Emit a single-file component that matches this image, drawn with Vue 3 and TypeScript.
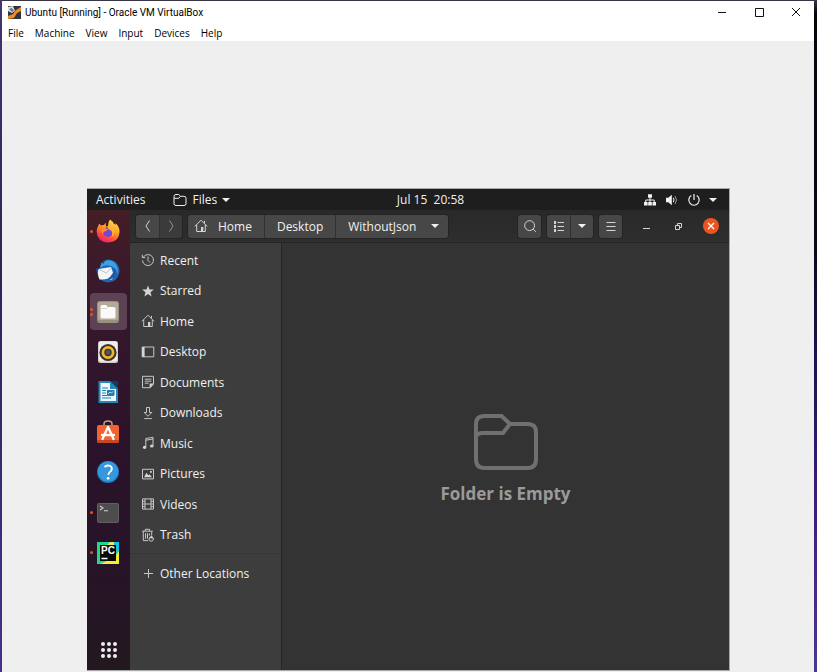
<script setup lang="ts">
interface Place {
  label: string
  line?: string
  solid?: string
}

interface DockApp {
  id: string
  label: string
  windows: number
  active?: boolean
}

const menus: string[] = ['File', 'Machine', 'View', 'Input', 'Devices', 'Help']

const dockApps: DockApp[] = [
  { id: 'firefox', label: 'Firefox', windows: 1 },
  { id: 'thunderbird', label: 'Thunderbird', windows: 0 },
  { id: 'files', label: 'Files', windows: 2, active: true },
  { id: 'rhythmbox', label: 'Rhythmbox', windows: 0 },
  { id: 'writer', label: 'Writer', windows: 0 },
  { id: 'software', label: 'Software', windows: 0 },
  { id: 'help', label: 'Help', windows: 0 },
  { id: 'terminal', label: 'Terminal', windows: 1 },
  { id: 'pycharm', label: 'PyCharm', windows: 1 },
]

const places: Place[] = [
  {
    label: 'Recent',
    line: 'M2.3 4.2A5.5 5.5 0 1 1 1.5 7.5M7 3.5V7.5L9 9.5M1.3 1.8V4.6H4.2',
  },
  {
    label: 'Starred',
    solid: 'M7 1.5L8.5 5.4L12.8 5.6L9.5 8.3L10.6 12.5L7 10.1L3.4 12.5L4.5 8.3L1.2 5.6L5.5 5.4Z',
  },
  {
    label: 'Home',
    line: 'M.8 7.4L7 1.2L13.2 7.4M2.7 6V12.5H11.3V6M10.5 1.8V4.3',
    solid: 'M7 8H9.3V12.8H7Z',
  },
  {
    label: 'Desktop',
    line: 'M1.2 2H12.8V11.8H1.2Z',
    solid: 'M1 2H3.6V12H1Z',
  },
  {
    label: 'Documents',
    line: 'M1.5 1.3H12.5V9.2L9.3 12.7H1.5ZM3.8 4.2H10.4M3.8 6.2H10.4M3.8 8.2H7.5',
    solid: 'M8.6 8.6H12.7L8.6 13Z',
  },
  {
    label: 'Downloads',
    line: 'M5.5 1.5H8.5V6.5H10.8L7 10.3L3.2 6.5H5.5ZM3.2 12.6H10.8',
  },
  {
    label: 'Music',
    line: 'M4.8 11V2.5L12 1.3V9.7M4.8 4.2L12 3',
    solid: 'M1.8 11.3A1.8 1.6 0 1 1 5.4 11.3A1.8 1.6 0 1 1 1.8 11.3M9 10A1.8 1.6 0 1 1 12.6 10A1.8 1.6 0 1 1 9 10',
  },
  {
    label: 'Pictures',
    line: 'M1.5 2.3H12.5V11.9H1.5Z',
    solid: 'M3 10.3L5.5 5.8L7.3 8.3L8.5 7.3L11 10.3ZM9 4H10.8V5.8H9Z',
  },
  {
    label: 'Videos',
    line: 'M1.5 1.9H12.5V12.1H1.5ZM4 2V12M10 2V12M4 7H10M1.5 4.4H4M1.5 7H4M1.5 9.6H4M10 4.4H12.5M10 7H12.5M10 9.6H12.5',
  },
  {
    label: 'Trash',
    line: 'M1 3.2H11.8M4.3 3V1.3H8.5V3M2.3 3.5V12.6H7.2M10.7 3.5V7.4M4.6 5.3V10.7M6.5 5.3V10.7M8.4 5.3V7.6M8 11A2 2 0 1 1 12.4 11A2 2 0 1 1 8 11',
    solid: 'M8.5 10.3L10.8 7.3L12 10.4Z',
  },
]
</script>

<template>
  <div class="wallpaper">
    <div class="vm-window">
      <header class="titlebar">
        <svg class="vm-logo" viewBox="0 0 13 13" aria-hidden="true">
          <rect width="13" height="13" fill="#30343c" />
          <path d="M0 1L5 0L7 5L4 7L0 5Z" fill="#dce0e4" />
          <path d="M5 8L8 4L13 1V5L9 7L6 12L0 13V10Z" fill="#f08a28" />
          <path d="M1 3L4 2L6 5L4 6Z" fill="#73716e" />
        </svg>
        <h1 class="vm-title">Ubuntu [Running] - Oracle VM VirtualBox</h1>
        <div class="caption-buttons">
          <button type="button" aria-label="Minimize">
            <svg viewBox="0 0 10 10"><path d="M1 5.5H9" /></svg>
          </button>
          <button type="button" aria-label="Maximize">
            <svg viewBox="0 0 10 10"><path d="M1.5 1.5H9.5V9.5H1.5Z" /></svg>
          </button>
          <button type="button" aria-label="Close">
            <svg viewBox="0 0 10 10"><path d="M1 1L9 9M9 1L1 9" /></svg>
          </button>
        </div>
      </header>

      <nav class="menubar" aria-label="Machine menu">
        <button v-for="menu in menus" :key="menu" type="button">{{ menu }}</button>
      </nav>

      <main class="viewport">
        <div class="guest">
          <div class="topbar">
            <div class="topbar-left">
              <button type="button">Activities</button>
              <button type="button" class="app-menu">
                <svg class="folder-icon" viewBox="0 0 14 14" aria-hidden="true">
                  <path d="M1 3.5Q1 1.5 3 1.5H5.7L7.5 3.3H11Q13 3.3 13 5.2V10.7Q13 12.5 11 12.5H3Q1 12.5 1 10.7ZM1 5.3H5.8L7.5 3.3" />
                </svg>
                Files
                <span class="caret"></span>
              </button>
            </div>
            <button type="button" class="clock">Jul 15&nbsp; 20:58</button>
            <div class="topbar-right">
              <svg viewBox="0 0 14 14" aria-label="Network">
                <path d="M5 1.2H9V4.8H5ZM1 9H4.6V12.6H1ZM5.2 9H8.8V12.6H5.2ZM9.5 9H13V12.6H9.5Z" fill="#f2f2f2" />
                <path d="M7 4V9M2.8 9V7H11.2V9" fill="none" stroke="#f2f2f2" />
              </svg>
              <svg viewBox="0 0 14 14" aria-label="Volume">
                <path d="M1 4.8H3.3L6.8 1.8V12.2L3.3 9.2H1Z" fill="#f2f2f2" />
                <path d="M8.3 4.8Q9.7 7 8.3 9.2" fill="none" stroke="#f2f2f2" />
                <path d="M10 3Q13 7 10 11" fill="none" stroke="#999" />
              </svg>
              <svg viewBox="0 0 14 14" aria-label="Power">
                <path d="M4.3 2.6A5.2 5.2 0 1 0 9.7 2.6M7 1V7" fill="none" stroke="#f2f2f2" stroke-width="1.2" />
              </svg>
              <span class="caret"></span>
            </div>
          </div>

          <div class="session">
            <aside class="dock">
              <div class="dock-apps">
                <button
                  v-for="app in dockApps"
                  :key="app.id"
                  type="button"
                  class="dock-app"
                  :class="{ active: app.active }"
                  :aria-label="app.label"
                >
                  <span class="pips"><i v-for="n in app.windows" :key="n"></i></span>
                  <svg viewBox="0 0 24 24" aria-hidden="true">
                    <template v-if="app.id === 'firefox'">
                      <defs>
                        <linearGradient id="fox" x1=".8" y1="0" x2=".3" y2="1">
                          <stop offset="0" stop-color="#ffe84a" />
                          <stop offset=".45" stop-color="#ff9a28" />
                          <stop offset=".75" stop-color="#ff4a3a" />
                          <stop offset="1" stop-color="#e81a78" />
                        </linearGradient>
                      </defs>
                      <path d="M14 .5Q17 2.5 18 5Q19.5 5 20 6Q19.8 4.5 19.2 3.8Q24 8 23.5 13.5Q22.5 23.3 12 23.5Q1.2 23 .6 12.5Q.5 9 2.5 6.5L3 4.5L5 6.5Q6.5 5.8 8 6L9.5 3.8L10 7.5L12 7Q11.8 3 14 .5Z" fill="url(#fox)" />
                      <circle cx="12" cy="13" r="5" fill="#7546d8" />
                      <path d="M5.5 10Q8.5 8 12 10.5L9.8 12.3Q7 12.5 7.3 15Q4.8 13 5.5 10Z" fill="#ff8a25" />
                      <path d="M13 6.5Q18 8 18.5 12.5Q18.6 16.5 15.5 18Q18 12 13 10.5Q10.5 8.5 13 6.5Z" fill="#ffb52d" />
                    </template>
                    <template v-else-if="app.id === 'thunderbird'">
                      <path d="M5 4Q11-2 18 2Q24 6 23.5 13Q22 22.5 13 23.5Q5 23 2 17L0 10L4 9Z" fill="#1d67b5" />
                      <path d="M5.5 4Q12-1 18 3Q23 8 21.5 15Q20 8 13 6.5Q8 5.5 4 9Z" fill="#3e9fe4" />
                      <path d="M0 11L4 8L3.5 12ZM6 3L9 2L7 5Z" fill="#0d3f81" />
                      <path d="M2.5 10L15 8L18 16.5L16 20.5L3.5 20.5Q1 15 2.5 10Z" fill="#f3f4f7" />
                      <path d="M3.5 10.5L10.5 14L15 9" fill="none" stroke="#b7c1cf" stroke-width="1" />
                      <path d="M19 9Q22 14 17 19Q12 22 7 21Q15 21 19 9Z" fill="#2459a1" />
                    </template>
                    <template v-else-if="app.id === 'files'">
                      <rect x="1" y="1" width="22" height="22" rx="3" fill="#98917e" />
                      <rect x="2" y="2" width="20" height="18" rx="2" fill="#b2ab99" />
                      <path d="M4.5 6.5Q4.5 5 6 5H10L12 7H18Q19.5 7 19.5 8.5V17Q19.5 18.5 18 18.5H6Q4.5 18.5 4.5 17Z" fill="#fafafa" />
                      <path d="M5 8.5H10.5L12 7" fill="none" stroke="#c9c6c0" stroke-width=".7" />
                    </template>
                    <template v-else-if="app.id === 'rhythmbox'">
                      <rect x="2" y="1" width="20" height="22" rx="2.5" fill="#d3cdc5" />
                      <rect x="3" y="1.5" width="18" height="20" rx="2" fill="#f1eeea" />
                      <circle cx="12" cy="12.5" r="8.6" fill="#343434" />
                      <circle cx="12" cy="12.5" r="5.1" fill="none" stroke="#f3b62b" stroke-width="2.8" />
                      <circle cx="12" cy="12.5" r="2.4" fill="#555" />
                    </template>
                    <template v-else-if="app.id === 'writer'">
                      <path d="M2.5 1H15L22 8V23H2.5Z" fill="#2387b9" />
                      <path d="M4.5 3H14V9H20V21H4.5Z" fill="#eef8fc" />
                      <path d="M14 1L22 9V1Z" fill="#123c59" />
                      <path d="M6 8H12M6 10.5H10M6 13H10M6 15.5H18M6 18H15" stroke="#1985b9" stroke-width="1.1" />
                      <path d="M11 10H18.5V15H11Z" fill="#227baa" />
                      <path d="M12 14L14 12L15.5 13L17 11.5" fill="none" stroke="#bdddeb" />
                    </template>
                    <template v-else-if="app.id === 'software'">
                      <path d="M8 6V4Q8 1 12 1Q16 1 16 4V6" fill="none" stroke="#c7a478" stroke-width="1.5" />
                      <rect x="1" y="5" width="22" height="18" rx="2" fill="#f26331" />
                      <path d="M1 20H23V21Q23 23 21 23H3Q1 23 1 21Z" fill="#c64524" />
                      <path d="M6.5 19L12 7L17.5 19M6 15H18" fill="none" stroke="#fff" stroke-width="2.3" stroke-linecap="round" stroke-linejoin="round" />
                    </template>
                    <template v-else-if="app.id === 'help'">
                      <circle cx="12" cy="12" r="11" fill="#1d79bb" />
                      <circle cx="12" cy="11.5" r="10.3" fill="#3597dd" />
                      <path d="M8.5 7Q11 4.7 14.3 6Q17 8 15 11Q12.3 12.8 12.2 15" fill="none" stroke="#fff" stroke-width="1.8" />
                      <circle cx="12.1" cy="18.3" r="1.4" fill="#fff" />
                    </template>
                    <template v-else-if="app.id === 'terminal'">
                      <rect x="1" y="2" width="22" height="20" rx="2" fill="#606060" />
                      <rect x="2" y="3" width="20" height="18" rx="1" fill="#4d4d4d" />
                      <path d="M4 5L7 7L4 9M8 9.8H12" fill="none" stroke="#d5d5d5" stroke-width="1.1" />
                    </template>
                    <template v-else>
                      <path d="M1 1H23V23H1Z" fill="#22d88f" />
                      <path d="M12 1H23V13L18 8Z" fill="#16c1e6" />
                      <path d="M23 10V23H4L18 17Z" fill="#f4ed3b" />
                      <path d="M11 4L14 1H18V5Z" fill="#e9ee42" />
                      <rect x="4" y="4" width="16" height="16" fill="#080a0a" />
                      <text x="5" y="13" class="pc-mark">PC</text>
                      <path d="M5.5 17.5H11.5" stroke="#fff" stroke-width="1.5" />
                    </template>
                  </svg>
                </button>
              </div>
              <button type="button" class="app-grid" aria-label="Show Applications">
                <i v-for="n in 9" :key="n"></i>
              </button>
            </aside>

            <section class="files">
              <header class="headerbar">
                <div class="group">
                  <button type="button" class="tool" aria-label="Back">
                    <svg viewBox="0 0 14 14"><path d="M8.5 1.5L5 7L8.5 12.5" /></svg>
                  </button>
                  <button type="button" class="tool dim" aria-label="Forward">
                    <svg viewBox="0 0 14 14"><path d="M5.5 1.5L9 7L5.5 12.5" /></svg>
                  </button>
                </div>
                <nav class="group path" aria-label="Path">
                  <button type="button" class="crumb home">
                    <svg viewBox="0 0 14 14" aria-hidden="true">
                      <path d="M.8 7.4L7 1.2L13.2 7.4M2.7 6V12.5H11.3V6M10.5 1.8V4.3" />
                      <path d="M7 8H9.3V12.8H7Z" class="solid" />
                    </svg>
                    Home
                  </button>
                  <button type="button" class="crumb">Desktop</button>
                  <button type="button" class="crumb current">WithoutJson<span class="caret"></span></button>
                </nav>
                <div class="header-tools">
                  <button type="button" class="tool single" aria-label="Search">
                    <svg viewBox="0 0 14 14"><circle cx="6.6" cy="6.6" r="4.9" /><path d="M10.2 10.2L12.8 12.8" /></svg>
                  </button>
                  <div class="group">
                    <button type="button" class="tool" aria-label="List view">
                      <svg viewBox="0 0 14 14">
                        <path d="M5.5 3.5H12M5.5 7.5H12M5.5 11.5H12" />
                        <path d="M2 2H4V5H2ZM2 6H4V9H2ZM2 10H4V13H2Z" class="solid" />
                      </svg>
                    </button>
                    <button type="button" class="tool" aria-label="View options"><span class="caret"></span></button>
                  </div>
                  <button type="button" class="tool single" aria-label="Menu">
                    <svg viewBox="0 0 14 14"><path d="M2.5 3.5H11.5M2.5 7.5H11.5M2.5 11.5H11.5" /></svg>
                  </button>
                </div>
                <div class="window-buttons">
                  <button type="button" aria-label="Minimize">
                    <svg viewBox="0 0 16 16"><path d="M4 10.5H11" /></svg>
                  </button>
                  <button type="button" aria-label="Restore">
                    <svg viewBox="0 0 16 16"><path d="M4.5 7.5H8.5V11.5H4.5ZM6.5 7.5V5.5H10.5V9.5H8.5" /></svg>
                  </button>
                  <button type="button" class="close" aria-label="Close">
                    <svg viewBox="0 0 16 16"><path d="M5 5L11 11M11 5L5 11" /></svg>
                  </button>
                </div>
              </header>

              <div class="files-body">
                <nav class="sidebar" aria-label="Places">
                  <ul class="places">
                    <li v-for="place in places" :key="place.label">
                      <a href="#" class="place">
                        <svg viewBox="0 0 14 14" aria-hidden="true">
                          <path v-if="place.line" :d="place.line" />
                          <path v-if="place.solid" :d="place.solid" class="solid" />
                        </svg>
                        {{ place.label }}
                      </a>
                    </li>
                  </ul>
                  <a href="#" class="place other">
                    <svg viewBox="0 0 14 14" aria-hidden="true"><path d="M7.5 3V12M3 7.5H12" /></svg>
                    Other Locations
                  </a>
                </nav>
                <div class="folder-view">
                  <svg class="empty-folder" viewBox="0 0 66 58" aria-hidden="true">
                    <path d="M3 11Q3 3 11 3H28.5L37 11H55Q63 11 63 19V46Q63 55 55 55H11Q3 55 3 46ZM3 24Q4 20 10 20H30L37 11" />
                  </svg>
                  <p>Folder is Empty</p>
                </div>
              </div>
            </section>
          </div>
        </div>
      </main>
    </div>
  </div>
</template>

<style>
body {
  margin: 0;
}
</style>

<style scoped>
* {
  box-sizing: border-box;
}

button {
  padding: 0;
  border: 0;
  background: none;
  color: inherit;
  font: inherit;
}

svg {
  display: block;
  flex: none;
}

.wallpaper {
  display: flex;
  min-height: 100vh;
  padding: 1px 3px 0 2px;
  background:
    linear-gradient(#43356e, #2f2358 40%, #46308a) left / 2px 100% no-repeat,
    linear-gradient(#3b3646 0, #05060c 2%, #080817 35%, #211353 55%, #45258a 85%, #4a3790);
}

.vm-window {
  display: flex;
  flex: 1;
  flex-direction: column;
  min-width: 0;
  background: #fff;
  color: #000;
  font-family: Roboto, "Open Sans", sans-serif;
  font-size: 10px;
}

.titlebar {
  display: flex;
  align-items: center;
  height: 22px;
  padding-left: 6px;
}

.vm-logo {
  width: 13px;
  height: 13px;
}

.vm-title {
  flex: 1;
  margin: 0 0 0 4px;
  font-size: 10px;
  font-weight: 400;
  white-space: nowrap;
}

.caption-buttons {
  display: flex;
}

.caption-buttons button {
  display: grid;
  place-items: center;
  width: 37px;
  height: 22px;
}

.caption-buttons svg {
  width: 10px;
  height: 10px;
  fill: none;
  stroke: #111;
}

.menubar {
  display: flex;
  gap: 12px;
  height: 18px;
  padding: 1px 0 0 6px;
  font-family: "Open Sans", "Noto Sans", sans-serif;
}

.menubar {
  gap: 11px;
}

.viewport {
  display: flex;
  flex: 1;
  padding: 147px 84px 1px 85px;
  background: #efefef;
}

.guest {
  display: flex;
  flex: 1;
  flex-direction: column;
  min-width: 0;
  border: solid #a8a8a8;
  border-width: 1px 1px 1px 0;
  background: #353535;
  color: #f0f0f0;
  font-family: "Open Sans", "Noto Sans", sans-serif;
  font-size: 12px;
}

.caret {
  border: 4px solid transparent;
  border-top-color: currentColor;
  border-bottom: 0;
}

.topbar {
  display: flex;
  align-items: center;
  height: 21px;
  padding: 0 12px 0 9px;
  background: #1e1e1e;
}

.topbar-left,
.topbar-right {
  display: flex;
  align-items: center;
}

.topbar-left {
  flex: 1 1 48px;
  gap: 28px;
}

.topbar-right {
  flex: 1 1 0;
  justify-content: flex-end;
  gap: 8px;
}

.topbar-right svg {
  width: 14px;
  height: 14px;
}

.app-menu {
  display: flex;
  align-items: center;
  gap: 5px;
}

.folder-icon {
  width: 14px;
  height: 14px;
  fill: none;
  stroke: #eee;
}

.session {
  display: flex;
  flex: 1;
}

.dock {
  display: flex;
  flex: 0 0 43px;
  flex-direction: column;
  justify-content: space-between;
  align-items: center;
  padding: 1px 0 8px;
  background: linear-gradient(#441e26, #36172d 22%, #2b132b 50%, #271328 75%, #231820);
}

.dock-apps {
  display: grid;
  grid-template-rows: repeat(9, 1fr);
  align-items: center;
  height: 362px;
}

.dock-app {
  display: grid;
  grid-template-columns: 3px 1fr 4px;
  align-items: center;
  justify-items: center;
  width: 37px;
  height: 37px;
  border-radius: 4px;
}

.dock-app.active {
  background: #5c4252;
}

.dock-app svg {
  width: 24px;
  height: 24px;
}

.pips {
  display: grid;
  gap: 2px;
}

.pips i {
  width: 3px;
  height: 3px;
  border-radius: 50%;
  background: #e95420;
}

.pc-mark {
  fill: #fff;
  font: 700 10px "Liberation Sans", sans-serif;
}

.app-grid {
  display: grid;
  grid-template-columns: repeat(3, 4px);
  gap: 2px;
  padding: 4px;
}

.app-grid i {
  width: 4px;
  height: 4px;
  border-radius: 50%;
  background: #eee;
}

.files {
  display: flex;
  flex: 1;
  flex-direction: column;
  min-width: 0;
}

.headerbar {
  display: flex;
  align-items: center;
  height: 33px;
  padding: 0 10px 0 6px;
  border-bottom: 1px solid #252525;
  background: linear-gradient(#292929, #2e2e2e);
}

.headerbar svg {
  width: 14px;
  height: 14px;
  fill: none;
  stroke: #d5d5d5;
}

.headerbar .solid,
.place .solid {
  fill: #d5d5d5;
  stroke: none;
}

.group {
  display: flex;
  border-radius: 3px;
  box-shadow: 0 0 0 1px #242424;
}

.group > button {
  background: #474747;
}

.group > button + button {
  border-left: 1px solid #303030;
}

.group > button:first-child {
  border-radius: 3px 0 0 3px;
}

.group > button:last-child {
  border-radius: 0 3px 3px 0;
}

.tool {
  display: grid;
  place-items: center;
  width: 23px;
  height: 23px;
}

.group > .tool.dim {
  background: #3b3b3b;
}

.tool.dim svg {
  stroke: #929292;
}

.tool.single {
  border-radius: 3px;
  background: #474747;
  box-shadow: 0 0 0 1px #242424;
}

.path {
  margin-left: 6px;
}

.crumb {
  display: flex;
  align-items: center;
  height: 23px;
  padding: 0 12px;
}

.crumb.home {
  gap: 10px;
  padding-left: 6px;
}

.crumb.current {
  gap: 15px;
  padding-right: 9px;
}

.header-tools {
  display: flex;
  gap: 6px;
  margin-left: auto;
}

.window-buttons {
  display: flex;
  gap: 16px;
  margin-left: 17px;
}

.window-buttons button {
  width: 16px;
  height: 16px;
  border-radius: 50%;
}

.window-buttons svg {
  width: 16px;
  height: 16px;
}

.window-buttons .close {
  background: #e95420;
}

.window-buttons .close svg {
  stroke: #fff;
  stroke-width: 1.4;
}

.files-body {
  display: flex;
  flex: 1;
}

.sidebar {
  flex: 0 0 152px;
  padding-top: 2px;
  border-right: 1px solid #242424;
  background: #3d3d3d;
}

.places {
  display: grid;
  grid-template-rows: repeat(10, 1fr);
  height: 305px;
  margin: 0;
  padding: 0;
  list-style: none;
}

.place {
  display: flex;
  align-items: center;
  gap: 5px;
  height: 100%;
  padding-left: 11px;
  color: #f0f0f0;
  text-decoration: none;
}

.place svg {
  width: 14px;
  height: 14px;
  fill: none;
  stroke: #c6c6c6;
}

.place.other {
  height: 39px;
  margin-top: 3px;
  border-top: 1px solid #363636;
}

.folder-view {
  display: flex;
  flex: 1;
  flex-direction: column;
  align-items: center;
  justify-content: center;
  gap: 12px;
  padding-top: 4px;
  background: #333;
  color: #9a9a9a;
}

.empty-folder {
  width: 66px;
  height: 58px;
  fill: none;
  stroke: #707070;
  stroke-width: 4;
}

.folder-view p {
  margin: 0;
  font-size: 17px;
  font-weight: 700;
  line-height: 22px;
}
</style>
